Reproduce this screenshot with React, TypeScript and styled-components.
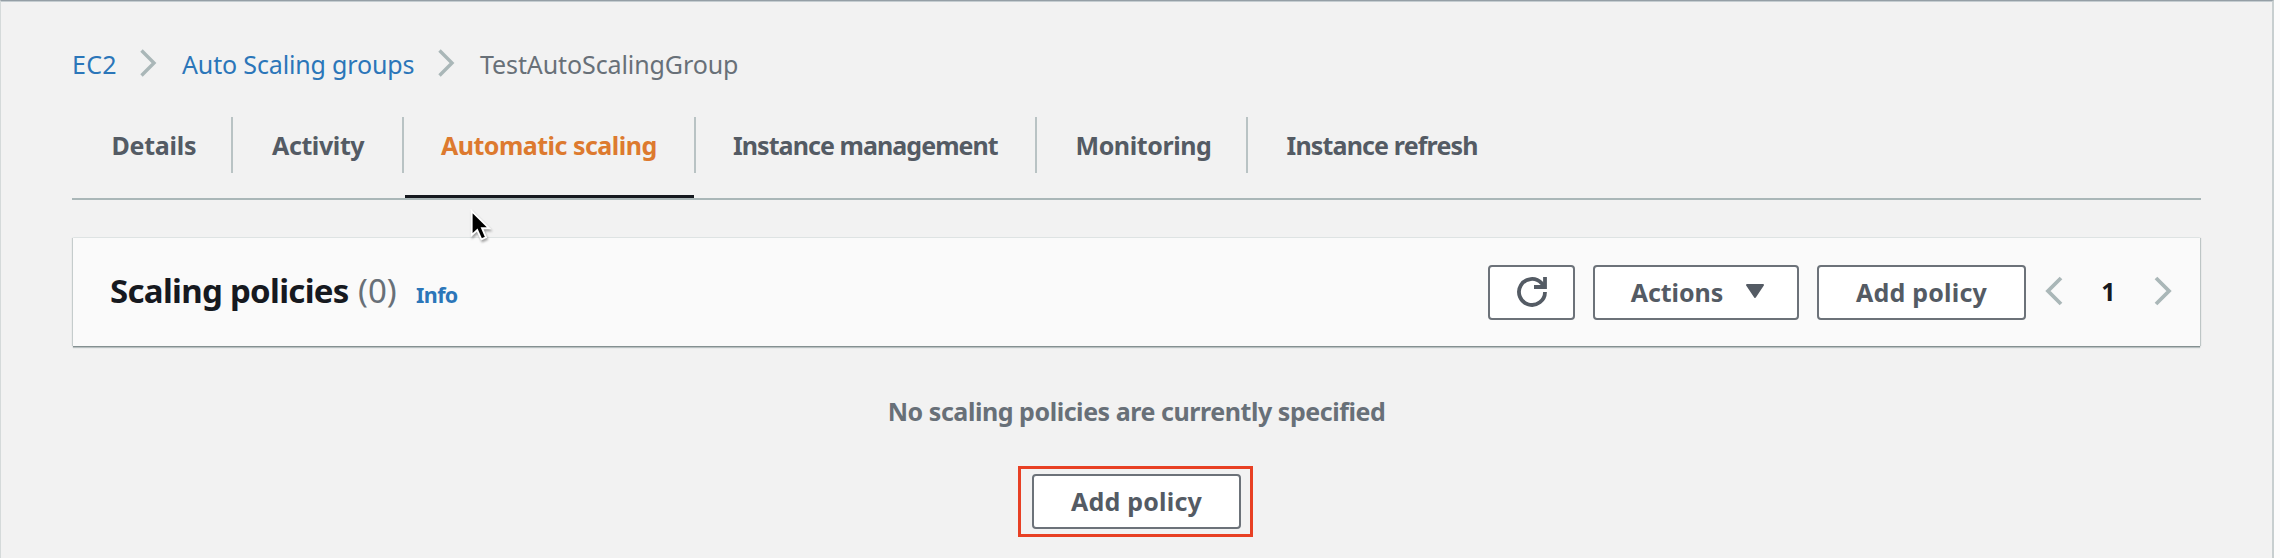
import React from 'react';
import styled, { createGlobalStyle } from 'styled-components';

const GlobalStyle = createGlobalStyle`
  * { box-sizing: border-box; }
  body { margin: 0; background: #fcfcfc; }
`;

const Page = styled.main`
  width: 2274px;
  height: 558px;
  overflow: hidden;
  position: relative;
  display: flex;
  flex-direction: column;
  padding: 44px 71px 0;
  background: #f2f2f2;
  border-top: 1px solid #959fa6;
  border-left: 1px solid #d5dada;
  border-right: 2px solid #c8cfd0;
  box-shadow: inset 0 1px 0 #c5cdd1;
  color: #545b64;
  font: 400 25px 'Noto Sans', sans-serif;
  white-space: nowrap;
`;

const Breadcrumbs = styled.nav`
  display: flex;
  align-items: center;
  height: 38px;
`;

const Crumb = styled.span<{ $width: number; $spacing?: number; $current?: boolean }>`
  width: ${(p) => p.$width}px;
  line-height: 38px;
  font-weight: 450;
  letter-spacing: ${(p) => p.$spacing ?? 0}px;
  color: ${(p) => (p.$current ? '#687078' : '#2b76b9')};
`;

const CrumbArrow = styled.svg`
  width: 18px;
  height: 28px;
  margin: 0 24px 2px 0;
  fill: none;
  stroke: #aab7b8;
  stroke-width: 3.4;
`;

const Tabs = styled.div`
  display: flex;
  height: 83px;
  margin-top: 34px;
  border-bottom: 2px solid #aab7b8;
`;

const Tab = styled.div<{ $width: number; $lead: number; $spacing: number; $active?: boolean; $last?: boolean }>`
  width: ${(p) => p.$width}px;
  height: 56px;
  padding-left: ${(p) => p.$lead}px;
  border-right: ${(p) => (p.$last ? 0 : 2)}px solid #b9c3c4;
  line-height: 56px;
  font-weight: 700;
  letter-spacing: ${(p) => p.$spacing}px;
  color: ${(p) => (p.$active ? '#dd7a2f' : '#545b64')};
  ${(p) =>
    p.$active &&
    `&::after {
      content: '';
      display: block;
      height: 3px;
      margin: 22px 0 0 ${1 - p.$lead}px;
      background: #16191f;
    }`}
`;

const Card = styled.section`
  display: flex;
  align-items: center;
  justify-content: space-between;
  width: 2127px;
  height: 108px;
  margin: 38px 0 0 1px;
  padding: 0 28px 0 37px;
  background: #fafafa;
  box-shadow: 0 1px 0 #849091, 0 2px 1px #b9c0c1, 1px 0 1px #c0c7c7, -1px 0 1px #c8cece, 0 -1px 0 #eaeded;
`;

const Heading = styled.div`
  display: flex;
  align-items: baseline;
  padding-bottom: 4px;
`;

const Title = styled.h2`
  width: 248px;
  margin: 0;
  font-size: 33px;
  line-height: 44px;
  letter-spacing: -0.7px;
  color: #16191f;
`;

const Count = styled.span`
  width: 58px;
  font-size: 33px;
  font-weight: 450;
  color: #687078;
`;

const Info = styled.a`
  font-size: 21.5px;
  font-weight: 700;
  letter-spacing: -0.6px;
  color: #2b76b9;
`;

const Controls = styled.div`
  display: flex;
  align-items: center;
`;

const Button = styled.button<{ $width: number; $gap?: number }>`
  display: flex;
  align-items: center;
  justify-content: center;
  width: ${(p) => p.$width}px;
  height: 55px;
  margin: 0 ${(p) => p.$gap ?? 0}px 0 0;
  padding: 0 0 1px;
  background: #fff;
  border: 2px solid #6c7279;
  border-radius: 4px;
  color: #545b64;
  font: 700 25px 'Noto Sans', sans-serif;
  letter-spacing: 0.2px;
`;

const RefreshIcon = styled.svg`
  width: 34px;
  height: 34px;
  fill: none;
  stroke: #545b64;
  stroke-width: 3.8;
`;

const ActionsLabel = styled.span`
  margin-left: 4px;
  letter-spacing: -0.1px;
`;

const Caret = styled.svg`
  width: 20px;
  height: 16px;
  margin: 0 0 2px 22px;
  fill: #545b64;
  stroke: #545b64;
  stroke-width: 2;
  stroke-linejoin: round;
`;

const PageArrow = styled.svg`
  width: 18px;
  height: 30px;
  margin-bottom: 2px;
  fill: none;
  stroke: #aab7b8;
  stroke-width: 3.8;
`;

const PageNumber = styled.span`
  width: 91px;
  padding-bottom: 2px;
  text-align: center;
  font-weight: 700;
  color: #16191f;
`;

const Empty = styled.section`
  display: flex;
  flex-direction: column;
  align-items: center;
  width: 2129px;
  padding-top: 47px;
`;

const EmptyText = styled.p`
  margin: 0;
  line-height: 36px;
  font-weight: 700;
  letter-spacing: -0.45px;
  color: #687078;
`;

const Highlight = styled.div`
  display: flex;
  align-items: center;
  justify-content: center;
  width: 235px;
  height: 71px;
  margin: 37px 2px 0 0;
  padding-left: 2px;
  border: 3px solid #e84024;
`;

const Pointer = styled.svg`
  position: absolute;
  left: 467px;
  top: 207px;
  width: 24px;
  height: 34px;
  filter: drop-shadow(1px 2px 1px rgba(0, 0, 0, 0.35));
`;

const tabs = [
  { label: 'Details', width: 161, lead: 39.5, spacing: -0.25 },
  { label: 'Activity', width: 171, lead: 39, spacing: -0.4 },
  { label: 'Automatic scaling', width: 292, lead: 37, spacing: -0.52, active: true },
  { label: 'Instance management', width: 341, lead: 37, spacing: -0.94 },
  { label: 'Monitoring', width: 211, lead: 38.5, spacing: -0.42 },
  { label: 'Instance refresh', width: 240, lead: 38.5, spacing: -0.84 },
];

const Separator = () => (
  <CrumbArrow viewBox="0 0 18 28">
    <path d="M1.500 1.500 14 14 1.500 26.500" />
  </CrumbArrow>
);

export default function App() {
  return (
    <>
      <GlobalStyle />
      <Page>
        <Breadcrumbs>
          <Crumb $width={68} $spacing={0.3}>EC2</Crumb>
          <Separator />
          <Crumb $width={256} $spacing={-0.15}>Auto Scaling groups</Crumb>
          <Separator />
          <Crumb $width={270} $spacing={-0.1} $current>TestAutoScalingGroup</Crumb>
        </Breadcrumbs>
        <Tabs>
          {tabs.map((t, i) => (
            <Tab
              key={t.label}
              $width={t.width}
              $lead={t.lead}
              $spacing={t.spacing}
              $active={t.active}
              $last={i === tabs.length - 1}
            >
              {t.label}
            </Tab>
          ))}
        </Tabs>
        <Card>
          <Heading>
            <Title>Scaling policies</Title>
            <Count>(0)</Count>
            <Info>Info</Info>
          </Heading>
          <Controls>
            <Button $width={87} $gap={18} aria-label="Refresh">
              <RefreshIcon viewBox="0 0 34 34">
                <path d="M30 17A13 13 0 1 1 26.5 8.1L29 11" />
                <path d="M30 2v10H19" />
              </RefreshIcon>
            </Button>
            <Button $width={206} $gap={18}>
              <ActionsLabel>Actions</ActionsLabel>
              <Caret viewBox="0 0 20 16">
                <path d="M2 2h16l-8 12z" />
              </Caret>
            </Button>
            <Button $width={209} $gap={19}>Add policy</Button>
            <PageArrow viewBox="0 0 18 30">
              <path d="M16 2 3 15 16 28" />
            </PageArrow>
            <PageNumber>1</PageNumber>
            <PageArrow viewBox="0 0 18 30">
              <path d="M2 2 15 15 2 28" />
            </PageArrow>
          </Controls>
        </Card>
        <Empty>
          <EmptyText>No scaling policies are currently specified</EmptyText>
          <Highlight>
            <Button $width={209}>Add policy</Button>
          </Highlight>
        </Empty>
        <Pointer viewBox="0 0 26 36">
          <path
            d="M4 3v26l6-5.500 4.500 10 5-2.200-4.300-9.800H23z"
            fill="#000"
            stroke="#fff"
            strokeWidth="2"
          />
        </Pointer>
      </Page>
    </>
  );
}
